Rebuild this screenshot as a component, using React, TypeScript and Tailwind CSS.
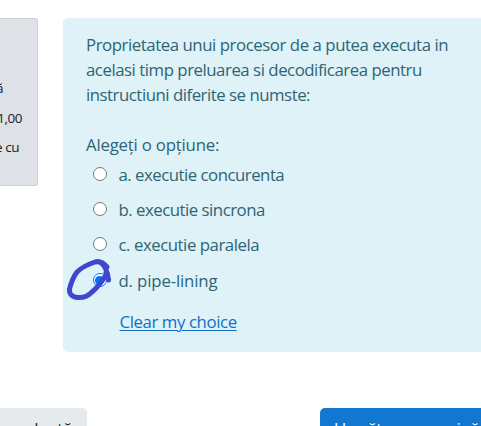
const lines = [
  { text: 'Proprietatea unui procesor de a putea executa in', tracking: 'tracking-[-0.44px]' },
  { text: 'acelasi timp preluarea si decodificarea pentru', tracking: 'tracking-[-0.46px]' },
  { text: 'instructiuni diferite se numste:', tracking: 'tracking-[-0.475px]' },
];

const options = [
  { text: 'a. executie concurenta', row: 'h-[35px]', tracking: 'tracking-[-0.5px]', checked: false },
  { text: 'b. executie sincrona', row: 'h-[35px]', tracking: 'tracking-[-0.49px]', checked: false },
  { text: 'c. executie paralela', row: 'h-[36px]', tracking: 'tracking-[-0.46px]', checked: false },
  { text: 'd. pipe-lining', row: 'h-[35px]', tracking: 'tracking-[-0.15px]', checked: true },
];

function Radio({ checked }: { checked: boolean }) {
  return (
    <span
      className={`flex size-[14px] shrink-0 items-center justify-center rounded-full border bg-white ${
        checked ? 'border-[#0075ff]' : 'border-[#767676]'
      }`}
    >
      {checked && <span className="size-[9px] rounded-full bg-[#0075ff]" />}
    </span>
  );
}

export default function App() {
  return (
    <div className="flex h-[426px] w-[481px] flex-col overflow-hidden bg-white font-['Open_Sans','Noto_Sans',sans-serif] text-[16.8px] leading-[25px] whitespace-nowrap">
      <div className="flex h-[352px] shrink-0 items-start gap-[25px] pt-[18px]">
        <aside className="flex h-[168px] w-[38px] shrink-0 flex-col items-end rounded-r-[3px] border border-l-0 border-[#cad0d7] bg-[#dee2e6] pt-[55px] text-[13.5px] leading-[29.5px] tracking-[-0.45px] text-[#1d2125]">
          <div className="mr-[34px]">Marcată</div>
          <div className="mr-[15px]">1,00</div>
          <div className="mr-[18px]">Întrebare cu</div>
        </aside>
        <main className="relative h-[334px] w-[418px] shrink-0 rounded-l-[5px] bg-[#def2f8] pt-[14px] pl-[23px] text-[#2f6473]">
          {lines.map((line) => (
            <div key={line.text} className={line.tracking}>{line.text}</div>
          ))}
          <div className="mt-[25px] tracking-[-0.2px]">Alegeți o opțiune:</div>
          {options.map((option) => (
            <label key={option.text} className={`flex items-start pl-[6.5px] ${option.row}`}>
              <span className="pt-[10px]"><Radio checked={option.checked} /></span>
              <span className={`ml-3 pt-[5px] ${option.tracking}`}>{option.text}</span>
            </label>
          ))}
          <a className="mt-[11px] ml-[33.500px] inline-block tracking-[-0.4px] text-[#0f6fc5] underline decoration-1 underline-offset-2">Clear my choice</a>
          <svg className="absolute top-[235px] left-0 h-[55px] w-[55px] overflow-visible" viewBox="63 253 55 55" fill="none" stroke="#3f48cc" strokeWidth="5" strokeLinecap="round" strokeLinejoin="round">
            <path d="M107 267C103.500 263 100 260.500 95 262C89 264 82 267 77 272C74 276 71 283 69.500 289C69 294 72 297 78 297.500C83 298 88 296 92 292C98 287 103 280 106.500 274M99 262C104 263 108 272 108.500 280M106 273L108.500 279" />
          </svg>
        </main>
      </div>
      <div className="mt-14 flex shrink-0 justify-between">
        <button className="flex h-10 w-[87px] items-start justify-end rounded-tr-[5px] bg-[#e7eaed] pt-[8px] pr-[15px] tracking-[-0.3px] text-[#1d2125]">Pagina precedentă</button>
        <button className="flex h-10 w-[161px] items-start rounded-tl-[5px] bg-[#1177d1] pt-[8px] pl-[14px] tracking-[-0.4px] text-white">Următoarea pagină</button>
      </div>
    </div>
  );
}
